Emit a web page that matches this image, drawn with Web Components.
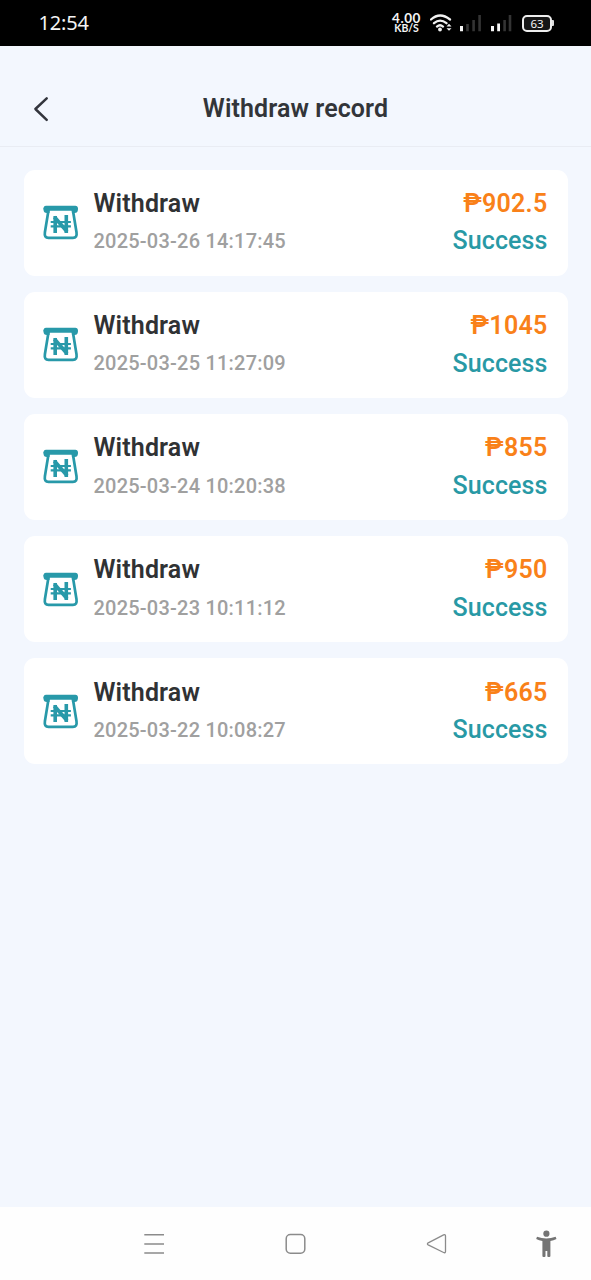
<!DOCTYPE html>
<html lang="en">
<head>
<meta charset="utf-8">
<title>Withdraw record</title>
<style>
html,body{margin:0;height:100%}
body{font-family:Roboto,"Noto Sans",sans-serif;background:#f3f7fe;overflow:hidden}
</style>
</head>
<body>
<record-app></record-app>
<script>
const define = (name, html, setup) => customElements.define(name, class extends HTMLElement {
  constructor() {
    super();
    this.attachShadow({mode: 'open'}).innerHTML = html;
  }
  connectedCallback() { if (setup) setup(this, this.shadowRoot); }
});

define('status-bar', `
<style>
:host{display:flex;align-items:center;height:46px;flex:none;background:#000;color:#f4f4f4;box-sizing:border-box;padding:0 37px 0 38.500px}
.time{font:400 20px/24px "Noto Sans",sans-serif;letter-spacing:-.15px;flex:1}
.rate{display:flex;flex-direction:column;align-items:center;width:29px;font-family:Lato,"Noto Sans",sans-serif;font-weight:700;margin-right:9px;white-space:nowrap}
.n{font-size:13.500px;line-height:11px;letter-spacing:.55px}
.u{font-size:10.500px;line-height:9px;letter-spacing:-.1px}
svg{display:block;flex:none}
.batt{display:flex;align-items:center}
.cell{box-sizing:border-box;width:30px;height:17px;border:2px solid #eee;border-radius:5px;background:#161616;font:400 11.500px/13px "Noto Sans",sans-serif;text-align:center}
.tip{width:2px;height:6px;background:#ddd;border-radius:0 1px 1px 0}
</style>
<span class="time">12:54</span>
<span class="rate"><span class="n">4.00</span><span class="u">KB/S</span></span>
<svg width="92" height="20" viewBox="430 13 92 20" fill="none">
<g stroke="#f2f2f2" stroke-width="2.300" stroke-linecap="round"><path d="M431 19.500Q440 11.500 450 19.500M434 23.200Q440 18 446.500 23.200M437 26.600Q440 24 443 26.600"/></g>
<circle cx="440" cy="29.500" r="1.900" fill="#f2f2f2"/>
<path d="M446.500 26.400 449 23.800 451.500 26.400zM446.500 28.200 449 30.800 451.500 28.200z" fill="#f2f2f2"/>
<path d="M460 26h3v5.300h-3zM491 26h3v5.300h-3zM497.200 23.500h2.800v7.800h-2.800z" fill="#f5f5f5"/>
<path d="M466.200 24h2.600v7.300h-2.600zM472.300 20h2.600v11.300h-2.600zM478.300 15h2.600v16.300h-2.600zM503.300 20h2.600v11.300h-2.600zM508.700 15h2.600v16.300h-2.600z" fill="#343434"/>
</svg>
<span class="batt"><span class="cell">63</span><span class="tip"></span></span>`);

define('page-header', `
<style>
:host{display:grid;grid-template-columns:82px 1fr 82px;align-items:center;height:100.500px;flex:none;box-sizing:border-box;padding-top:26px;border-bottom:1px solid #e9ecf3}
svg{display:block;margin-left:32px}
h1{margin:1px 0 0;color:#323539;font-size:25px;line-height:30px;font-weight:600;letter-spacing:.1px;text-align:center;white-space:nowrap}
</style>
<svg width="18" height="26" viewBox="32 96 18 26" fill="none" stroke="#33353d" stroke-width="2.500" stroke-linecap="round" stroke-linejoin="round"><path d="M46.700 98.300 35.400 109 46.700 119.800"/></svg>
<h1><slot></slot></h1>`);

define('cash-icon', `
<style>:host{display:block;width:36px;height:36px}svg{display:block}</style>
<svg width="36" height="36" viewBox="0 0 36 36" fill="none" stroke="#2899a9">
<path d="M3 4.200H32.400" stroke-width="5" stroke-linecap="round"/>
<path d="M.5 4.200V5.500A3.500 3.500 0 0 0 4 9H6.500V4.200ZM34.900 4.200V5.500A3.500 3.500 0 0 1 31.400 9H28.900V4.200Z" fill="#2899a9" stroke="none"/>
<path d="M5.700 5 1.900 28.200Q1 33.800 5.500 33.800H29.900Q34.400 33.800 33.500 28.200L29.700 5" stroke-width="2.700" stroke-linejoin="round"/>
<path d="M12.200 29V12M23.300 29V11" stroke-width="3.600"/>
<path d="M11.400 13 24 27.500" stroke-width="3.800"/>
<path d="M7.700 18H27.900M7.700 22.400H27.900" stroke-width="2.100"/>
</svg>`);

define('record-card', `
<style>
:host{display:flex;box-sizing:border-box;height:106.200px;padding:0 20px 0 19px;background:#fff;border-radius:11px}
cash-icon{margin-top:34.500px;margin-right:15px}
.info,.result{display:flex;flex-direction:column;padding-top:18.400px;white-space:nowrap}
.info{flex:1}
.result{align-items:flex-end;text-align:right}
.title,.amount,.state{font-size:25px;line-height:32px}
.title{font-weight:600;color:#303234;letter-spacing:.15px}
.date{font-size:20px;font-weight:500;line-height:32px;margin-top:5.300px;color:#a0a0a0;letter-spacing:.22px}
.amount{font-weight:600;color:#f98119;letter-spacing:.25px}
.state{font-weight:500;margin-top:5.600px;color:#2899a5;letter-spacing:.1px}
</style>
<cash-icon></cash-icon>
<div class="info"><span class="title"><slot></slot></span><span class="date"></span></div>
<div class="result"><span class="amount"></span><span class="state">Success</span></div>`,
(host, root) => {
  root.querySelector('.date').textContent = host.getAttribute('date');
  root.querySelector('.amount').textContent = '₱' + host.getAttribute('amount');
});

define('nav-bar', `
<style>
:host{display:block;height:73px;flex:none;background:#fefefe}
svg{display:block}
</style>
<svg width="591" height="73" viewBox="0 1207 591 73" fill="none" stroke="#8b8b8b" stroke-width="1.500">
<path d="M144.300 1234.800H164M144.300 1243.900H164M144.300 1252.900H164"/>
<rect x="286.200" y="1234.600" width="18.600" height="18.600" rx="4.200"/>
<path d="M428.200 1242.800 443.600 1234.900Q445.500 1234.200 445.500 1236V1251.400Q445.500 1253.300 443.600 1252.500L428.200 1244.900Q426.600 1243.900 428.200 1242.800Z" stroke-width="1.300"/>
<g fill="#747474" stroke="none"><circle cx="546.400" cy="1233.700" r="3.100"/><path d="M537 1236.700Q546.400 1240.200 555.600 1236.700L556.500 1238.900Q553.500 1240.500 550.400 1241V1256Q550.400 1257 549.300 1257H548.300Q547.300 1257 547.300 1256V1251H545.500V1256Q545.500 1257 544.500 1257H543.400Q542.400 1257 542.400 1256V1241Q539 1240.500 536.200 1238.900Z"/></g>
</svg>`);

define('record-app', `
<style>
:host{display:flex;flex-direction:column;height:100vh;background:#f3f7fe}
main{flex:1;display:flex;flex-direction:column;gap:16px;padding:23px 23.500px 0}
</style>
<status-bar></status-bar>
<page-header>Withdraw record</page-header>
<main>
<record-card date="2025-03-26 14:17:45" amount="902.5">Withdraw</record-card>
<record-card date="2025-03-25 11:27:09" amount="1045">Withdraw</record-card>
<record-card date="2025-03-24 10:20:38" amount="855">Withdraw</record-card>
<record-card date="2025-03-23 10:11:12" amount="950">Withdraw</record-card>
<record-card date="2025-03-22 10:08:27" amount="665">Withdraw</record-card>
</main>
<nav-bar></nav-bar>`);
</script>
</body>
</html>
